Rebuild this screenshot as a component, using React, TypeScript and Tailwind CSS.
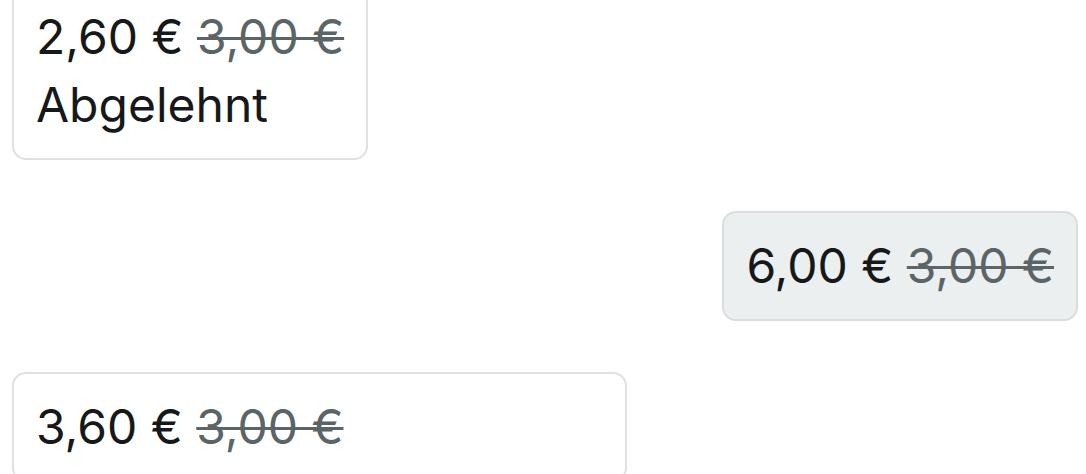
const offers = [
  { price: "2,60 €", original: "3,00 €", status: "Abgelehnt", mine: false },
  { price: "6,00 €", original: "3,00 €", mine: true },
  { price: "3,60 €", original: "3,00 €", mine: false, wide: true },
];

function Offer({
  price,
  original,
  status,
  mine,
  wide,
}: {
  price: string;
  original: string;
  status?: string;
  mine?: boolean;
  wide?: boolean;
}) {
  return (
    <div
      className={
        mine
          ? "self-end rounded-[14px] border-2 border-[#dcdddd] bg-[#eceff0] px-[22px] py-[19px]"
          : wide
            ? "w-[615px] self-start rounded-[14px] border-2 border-[#e1e1e1] bg-white px-[22px] py-[19px]"
            : "self-start rounded-[14px] border-2 border-[#e1e1e1] bg-white px-[22px] py-[19px]"
      }
    >
      <p className="whitespace-nowrap">
        <span className="text-[#161819]">{price}</span>{" "}
        <span className="text-[#5b6567] line-through decoration-[3px]">{original}</span>
      </p>
      {status && <p className="text-[#161819]">{status}</p>}
    </div>
  );
}

export default function App() {
  return (
    <div className="h-[474px] w-[1086px] overflow-hidden bg-white font-['Inter',sans-serif] text-[48px] leading-[68px]">
      <div className="-mt-[18px] flex flex-col gap-[51px] pl-[12px] pr-[8px]">
        {offers.map((o, i) => (
          <Offer key={i} {...o} />
        ))}
      </div>
    </div>
  );
}
